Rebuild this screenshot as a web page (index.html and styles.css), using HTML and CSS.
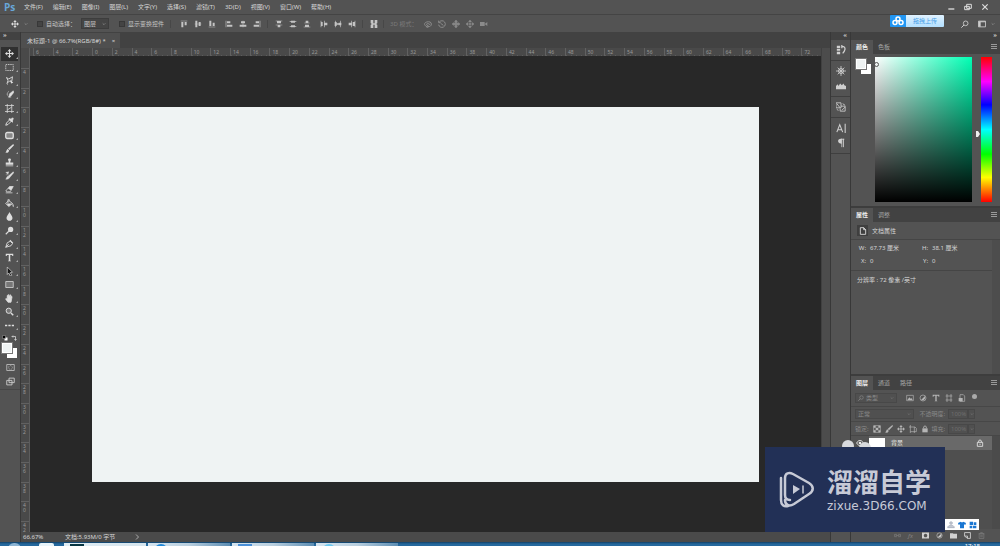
FILE: index.html
```html
<!DOCTYPE html>
<html lang="zh-CN">
<head>
<meta charset="utf-8">
<title>未标题-1</title>
<link rel="stylesheet" href="styles.css">
</head>
<body>
<svg class="defs" aria-hidden="true">
  <symbol id="move" viewBox="0 0 12 12"><path d="M6 2v8M2 6h8" stroke="currentColor" stroke-width="1.400"/><path d="M6 0 8.500 3h-5zM6 12 3.500 9h5zM0 6l3-2.500v5zM12 6 9 8.500v-5z" fill="currentColor"/></symbol>
  <symbol id="chev" viewBox="0 0 12 12"><path d="m2 4 4 4 4-4" fill="none" stroke="currentColor" stroke-width="2"/></symbol>
  <symbol id="al-top" viewBox="0 0 12 12"><path d="M1 1h10v1H1zM2 3h3v8H2zM7 3h3v5H7z" fill="currentColor"/></symbol>
  <symbol id="al-mid" viewBox="0 0 12 12"><path d="M1 5.500h10v1H1zM2 1h3v10H2zM7 3h3v6H7z" fill="currentColor"/></symbol>
  <symbol id="al-bot" viewBox="0 0 12 12"><path d="M1 10h10v1H1zM2 1h3v8H2zM7 4h3v5H7z" fill="currentColor"/></symbol>
  <symbol id="al-left" viewBox="0 0 12 12"><path d="M1 1h1v10H1zM3 2h5v3H3zM3 7h8v3H3z" fill="currentColor"/></symbol>
  <symbol id="al-cen" viewBox="0 0 12 12"><path d="M5.500 1h1v10h-1zM3 2h6v3H3zM1 7h10v3H1z" fill="currentColor"/></symbol>
  <symbol id="al-right" viewBox="0 0 12 12"><path d="M10 1h1v10h-1zM4 2h5v3H4zM1 7h8v3H1z" fill="currentColor"/></symbol>
  <symbol id="di-top" viewBox="0 0 12 12"><path d="M1 1h10v1H1zM3 2h6v3H3zM1 7h10v1H1zM4 8h4v3H4z" fill="currentColor"/></symbol>
  <symbol id="di-mid" viewBox="0 0 12 12"><path d="M1 2h10v1H1zM3 1h6v3H3zM1 9h10v1H1zM3 8h6v3H3z" fill="currentColor"/></symbol>
  <symbol id="di-bot" viewBox="0 0 12 12"><path d="M4 1h4v3H4zM2 4h8v1H2zM3 7h6v3H3zM1 10h10v1H1z" fill="currentColor"/></symbol>
  <symbol id="di-left" viewBox="0 0 12 12"><path d="M1 1h1v10H1zM2 3h2v6H2zM6 1h1v10H6zM7 4h4v4H7z" fill="currentColor"/></symbol>
  <symbol id="di-cen" viewBox="0 0 12 12"><path d="M2 1h1v10H2zM1 3h3v6H1zM9 1h1v10H9zM7 4h4v4H7zM4 5h3v2H4z" fill="currentColor"/></symbol>
  <symbol id="di-right" viewBox="0 0 12 12"><path d="M5 1h1v10H5zM1 4h4v4H1zM10 1h1v10h-1zM7 3h3v6H7z" fill="currentColor"/></symbol>
  <symbol id="auto" viewBox="0 0 12 12"><path d="M1 0h4v5H1zM7 0h4v5H7zM1 7h4v5H1zM7 7h4v5H7zM2 5h8v2H2z" fill="currentColor"/></symbol>
  <symbol id="orbit" viewBox="0 0 12 12"><path d="M3 9C0 8 0 4 4 3s7 0 7 3-2 4-5 4M3 7c2-2 4-2 6 0M6 8v3l-3-1z" fill="none" stroke="currentColor" stroke-width="1.500"/></symbol>
  <symbol id="roll" viewBox="0 0 12 12"><path d="M2 3a5 5 0 1 1-1 4M1 1v3h3M4 5l4 3" fill="none" stroke="currentColor" stroke-width="1.500"/></symbol>
  <symbol id="pan" viewBox="0 0 12 12"><path d="m6 0 2 3H7v2h2V4l3 2-3 2V7H7v2h1l-2 3-2-3h1V7H3v1L0 6l3-2v1h2V3H4z" fill="currentColor" stroke="currentColor"/></symbol>
  <symbol id="slide" viewBox="0 0 12 12"><path d="m6 0 2 3H4zm0 12L4 9h4zM0 6l3-2v4zm12 0L9 8V4z" fill="currentColor" stroke="currentColor"/><circle cx="6" cy="6" r="1.500" fill="currentColor"/></symbol>
  <symbol id="cam" viewBox="0 0 12 12"><path d="M0 3h7v6H0zM7 6l4-3v6z" fill="currentColor"/></symbol>
  <symbol id="search" viewBox="0 0 12 12"><circle cx="7" cy="5" r="3.500" fill="none" stroke="currentColor" stroke-width="1.300"/><path d="m4.500 7.500-4 4" stroke="currentColor" stroke-width="1.500"/></symbol>
  <symbol id="space" viewBox="0 0 12 12"><path d="M.7 1.700h10.600v8.600H.7z" fill="none" stroke="currentColor" stroke-width="1.300"/><path d="M1 2h3v8H1zM1 2h10v1.500H1z" fill="currentColor"/></symbol>
  <symbol id="marquee" viewBox="0 0 12 12"><path d="M1 2h10v8H1z" fill="none" stroke="currentColor" stroke-dasharray="2 1"/></symbol>
  <symbol id="lasso" viewBox="0 0 12 12"><path d="m2 2 3 2 5-3-1 6H6L3 9l1-3zM3 9c-1 1 0 2 1 2" fill="none" stroke="currentColor" stroke-width="1.200"/><path d="m7 5 4 4-3 1z" fill="currentColor"/></symbol>
  <symbol id="quick" viewBox="0 0 12 12"><path d="M5 2a4 4 0 1 0 4 7" fill="none" stroke="currentColor" stroke-dasharray="2 1"/><path d="m11 1 1 2-4 5-3 2 1-5z" fill="currentColor" stroke="currentColor" stroke-width=".6"/></symbol>
  <symbol id="crop" viewBox="0 0 12 12"><path d="M3 0v12M9 0v12M0 2h12M0 10h12M3 8l6-4" fill="none" stroke="currentColor"/></symbol>
  <symbol id="dropper" viewBox="0 0 12 12"><path d="m1 11 1-3 5-5 2 2-5 5z" fill="none" stroke="currentColor" stroke-width="1.300"/><path d="M6 2 8 3l2-2 1 1-1 3v2L5 3z" fill="currentColor" stroke="currentColor"/></symbol>
  <symbol id="patch" viewBox="0 0 12 12"><rect x="1" y="2" width="10" height="8" rx="2" fill="#888" stroke="currentColor" stroke-width="1.800"/></symbol>
  <symbol id="brush" viewBox="0 0 12 12"><path d="m11 0 1 1.500L6 8 4 6zM3.500 6.500l2 2C5 12 2 12 0 11c2 0 2-4 3.500-4.500" fill="currentColor"/></symbol>
  <symbol id="stamp" viewBox="0 0 12 12"><path d="M4 2c0-2 4-2 4 0L7 5v1h4v3H1V6h4V5zM1 10h10v1H1z" fill="currentColor"/></symbol>
  <symbol id="history" viewBox="0 0 12 12"><path d="m11 1 1 1-6 7-2-2zM3.500 7 6 9c-1 2-3 2-5 2 1-1 1-3 2.500-4M1 2l4-1-1 3zM1 5h4" fill="currentColor" stroke="currentColor" stroke-width=".5"/></symbol>
  <symbol id="eraser" viewBox="0 0 12 12"><path d="m1 8 5-6h5L7 9H3z" fill="none" stroke="currentColor"/><path d="m4 5 2-3h5L8 7zM1 10h9v1H1z" fill="currentColor"/></symbol>
  <symbol id="bucket" viewBox="0 0 12 12"><path d="m1 6 4-4 5 4-5 4zM4 5V1c0-1 2-1 2 1" fill="none" stroke="currentColor" stroke-width="1.200"/><path d="M2 6h7l-4 4zM10 6c2 1 2 4 1 5-1-1-1-3-1-5" fill="currentColor"/></symbol>
  <symbol id="drop" viewBox="0 0 12 12"><path d="M6 0c1 3 4 5 4 8 0 5-8 5-8 0 0-3 3-5 4-8" fill="currentColor"/></symbol>
  <symbol id="dodge" viewBox="0 0 12 12"><circle cx="7.500" cy="4.500" r="3.500" fill="currentColor"/><path d="m5 7-4 4" stroke="currentColor" stroke-width="1.500"/></symbol>
  <symbol id="pen" viewBox="0 0 12 12"><path d="m1 11 2-6 4-2 3 3-2 3zM1 11l4-4" fill="none" stroke="currentColor" stroke-width="1.200"/><path d="m7 1 4 4-1 1-4-4z" fill="currentColor"/></symbol>
  <symbol id="type" viewBox="0 0 12 12"><path d="M1 1h10v3h-1L9 2.500H7V10l1 .5v.5H4v-.5l1-.5V2.500H3L2 4H1z" fill="currentColor"/></symbol>
  <symbol id="arrow" viewBox="0 0 12 12"><path d="m3 0 7 7-3 .5L9 11l-2 1-2-4-2 2z" fill="#161616" stroke="currentColor" stroke-width=".9"/></symbol>
  <symbol id="rect" viewBox="0 0 12 12"><path d="M1 2h10v8H1z" fill="#777" stroke="currentColor"/></symbol>
  <symbol id="hand" viewBox="0 0 12 12"><path d="M4 11 1 7c0-2 1-1 2 0V2c1-1 1 0 1.500 3V1c1-1 1 0 1.500 3l1-3c1 0 1 1 .5 4l1-2c1 0 1 1 .5 3L8 11z" fill="currentColor" stroke="currentColor"/></symbol>
  <symbol id="zoom" viewBox="0 0 12 12"><circle cx="5" cy="5" r="3.500" fill="#777" stroke="currentColor" stroke-width="1.300"/><path d="m8 8 3 3" stroke="currentColor" stroke-width="2"/></symbol>
  <symbol id="dots" viewBox="0 0 12 12"><path d="M0 5h3v2H0zM4.500 5h3v2h-3zM9 5h3v2H9z" fill="currentColor"/></symbol>
  <symbol id="mask" viewBox="0 0 12 12"><path d="M1 2h10v8H1z" fill="none" stroke="currentColor"/><circle cx="6" cy="6" r="2.500" fill="none" stroke="currentColor" stroke-dasharray="1 1"/></symbol>
  <symbol id="screen" viewBox="0 0 12 12"><path d="M4 1.500h7v6H4zM1 4.500h7v6H1z" fill="#535353" stroke="currentColor" stroke-width="1.200"/></symbol>
  <symbol id="hist" viewBox="0 0 12 12"><path d="M1 1h4v2.500H1zM1 4.500h4V7H1zM1 8h4v3H1z" fill="currentColor"/><path d="M7 2h2c3 1 2 5-1 8M7 0v4" fill="none" stroke="currentColor" stroke-width="1.500"/></symbol>
  <symbol id="wheel" viewBox="0 0 12 12"><path d="M6 0v12M0 6h12M2 2l8 8M10 2l-8 8" stroke="currentColor"/><circle cx="6" cy="6" r="3" fill="none" stroke="currentColor"/></symbol>
  <symbol id="levels" viewBox="0 0 12 12"><path d="M0 10V6l2-2 1 2 2-3 2 2 2-2 1 2 2 1v4z" fill="currentColor"/></symbol>
  <symbol id="clone" viewBox="0 0 12 12"><path d="M0 1h6v6H0zM6 5h5v6H5V8M1 2l4 5M7 10l4-4M8 2l3 2M1 9l2 1" fill="none" stroke="currentColor"/></symbol>
  <symbol id="char" viewBox="0 0 12 12"><path d="m1 11 3.500-9L8 11M2.500 8h4M11 1v11" fill="none" stroke="currentColor" stroke-width="1.300"/></symbol>
  <symbol id="para" viewBox="0 0 12 12"><path d="M9 1v10M7 1v10M10 1.500H6" fill="none" stroke="currentColor"/><path d="M7 1C1 0 1 7 7 7z" fill="currentColor"/></symbol>
  <symbol id="menu" viewBox="0 0 12 12"><path d="M0 1h12M0 5h12M0 9h12" stroke="currentColor" stroke-width="2"/></symbol>
  <symbol id="page" viewBox="0 0 12 12"><path d="M2 1h5l3 3v7H2zM7 1v3h3" fill="none" stroke="currentColor" stroke-width="1.200"/></symbol>
  <symbol id="image" viewBox="0 0 12 12"><path d="M1 2h10v8H1z" fill="none" stroke="currentColor"/><path d="m2 9 3-4 2 2 1-1 2 3z" fill="currentColor"/></symbol>
  <symbol id="half" viewBox="0 0 12 12"><circle cx="6" cy="6" r="4.500" fill="none" stroke="currentColor"/><path d="M9 3a4.500 4.500 0 0 1-6 6z" fill="currentColor"/></symbol>
  <symbol id="frame" viewBox="0 0 12 12"><path d="M3 0v12M9 0v12M1 3h10M1 9h10" fill="none" stroke="currentColor"/></symbol>
  <symbol id="smart" viewBox="0 0 12 12"><path d="M3 1h5l2 2v8H3z" fill="none" stroke="currentColor"/><path d="M1 6h6v5H1z" fill="currentColor"/></symbol>
  <symbol id="checker" viewBox="0 0 12 12"><path d="M1 1h10v10H1z" fill="none" stroke="currentColor"/><path d="M1 1h3v3H1zM8 1h3v3H8zM4 4h4v4H4zM1 8h3v3H1zM8 8h3v3H8z" fill="currentColor"/></symbol>
  <symbol id="board" viewBox="0 0 12 12"><path d="M2 0v12M0 3h9l2 2v5M2 10h9M8 3v9" fill="none" stroke="currentColor"/></symbol>
  <symbol id="lock" viewBox="0 0 12 12"><path d="M4 5V3c0-2 4-2 4 0v2" fill="none" stroke="currentColor" stroke-width="1.300"/><path d="M2 5h8v6H2z" fill="currentColor"/></symbol>
  <symbol id="lock-o" viewBox="0 0 12 12"><path d="M4 5V3c0-2 4-2 4 0v2M2 5h8v6H2zM6 7v2" fill="none" stroke="currentColor" stroke-width="1.200"/></symbol>
  <symbol id="eye" viewBox="0 0 12 12"><path d="M1 6c2-5 8-5 10 0-2 5-8 5-10 0" fill="none" stroke="currentColor" stroke-width="1.300"/><circle cx="6" cy="6" r="2" fill="currentColor"/></symbol>
  <symbol id="link" viewBox="0 0 12 12"><path d="M5 4H1v4h4M7 4h4v4H7M3 6h6" fill="none" stroke="currentColor"/></symbol>
  <symbol id="addmask" viewBox="0 0 12 12"><path d="M0 1h12v10H0zm6 2a3 3 0 1 0 .1 0" fill="currentColor" fill-rule="evenodd"/></symbol>
  <symbol id="folder" viewBox="0 0 12 12"><path d="M0 2h5l1 1h6v8H0z" fill="currentColor"/></symbol>
  <symbol id="new" viewBox="0 0 12 12"><path d="M1 1h10v10H6L1 7zM1 7h5v4" fill="none" stroke="currentColor" stroke-width="1.500"/></symbol>
  <symbol id="trash" viewBox="0 0 12 12"><path d="M2 3h8v8H2zM1 3h10M4 1h4M5 5v4M7 5v4" fill="none" stroke="currentColor"/></symbol>
</svg>

<header class="menubar">
  <span class="logo">Ps</span>
  <nav class="menus">
    <button>文件(F)</button><button>编辑(E)</button><button>图像(I)</button><button>图层(L)</button><button>文字(Y)</button><button>选择(S)</button><button>滤镜(T)</button><button>3D(D)</button><button>视图(V)</button><button>窗口(W)</button><button>帮助(H)</button>
  </nav>
  <div class="winbtns">
    <button aria-label="最小化"><svg viewBox="0 0 12 12"><path d="M2 9h9" stroke="currentColor" stroke-width="2"/></svg></button>
    <button aria-label="还原"><svg viewBox="0 0 12 12"><path d="M4 2h7v6H4zM1 5h7v5H1z" fill="none" stroke="currentColor" stroke-width="1.500"/></svg></button>
    <button aria-label="关闭"><svg viewBox="0 0 12 12"><path d="m2 2 8 8M10 2l-8 8" stroke="currentColor" stroke-width="1.800"/></svg></button>
  </div>
</header>

<div class="options">
  <div class="current"><svg class="big"><use href="#move"/></svg><svg class="tiny"><use href="#chev"/></svg></div>
  <label class="check"><input type="checkbox">自动选择：</label>
  <span class="select"><select aria-label="自动选择目标"><option>图层</option></select><svg class="tiny"><use href="#chev"/></svg></span>
  <label class="check second"><input type="checkbox">显示变换控件</label>
  <div class="group first">
    <button aria-label="顶对齐"><svg><use href="#al-top"/></svg></button><button aria-label="垂直居中"><svg><use href="#al-mid"/></svg></button><button aria-label="底对齐"><svg><use href="#al-bot"/></svg></button>
  </div>
  <div class="group">
    <button aria-label="左对齐"><svg><use href="#al-left"/></svg></button><button aria-label="水平居中"><svg><use href="#al-cen"/></svg></button><button aria-label="右对齐"><svg><use href="#al-right"/></svg></button>
  </div>
  <div class="group ruled">
    <button aria-label="按顶分布"><svg><use href="#di-top"/></svg></button><button aria-label="垂直分布"><svg><use href="#di-mid"/></svg></button><button aria-label="按底分布"><svg><use href="#di-bot"/></svg></button>
  </div>
  <div class="group">
    <button aria-label="按左分布"><svg><use href="#di-left"/></svg></button><button aria-label="水平分布"><svg><use href="#di-cen"/></svg></button><button aria-label="按右分布"><svg><use href="#di-right"/></svg></button>
  </div>
  <div class="group ruled"><button aria-label="自动对齐"><svg><use href="#auto"/></svg></button></div>
  <div class="mode">3D 模式：</div>
  <div class="group dim">
    <button disabled aria-label="旋转"><svg><use href="#orbit"/></svg></button><button disabled aria-label="滚动"><svg><use href="#roll"/></svg></button><button disabled aria-label="拖动"><svg><use href="#pan"/></svg></button><button disabled aria-label="滑动"><svg><use href="#slide"/></svg></button><button disabled aria-label="缩放"><svg><use href="#cam"/></svg></button>
  </div>
  <button class="upload"><span class="cloud"><svg viewBox="0 0 16 12"><g fill="none" stroke="#fff" stroke-width="1.500"><circle cx="8" cy="4" r="2"/><circle cx="5" cy="7.500" r="2"/><circle cx="11" cy="7.500" r="2"/></g></svg></span><span class="uptext">拖拽上传</span></button>
  <div class="right">
    <button aria-label="搜索"><svg><use href="#search"/></svg></button>
    <button aria-label="工作区"><svg><use href="#space"/></svg></button>
    <svg class="tiny"><use href="#chev"/></svg>
  </div>
</div>

<main class="work">
  <aside class="tools">
    <div class="strip left">»</div>
    <div class="toolbox">
      <div class="toollist">
        <button class="on" aria-label="移动"><svg><use href="#move"/></svg></button>
        <button aria-label="选框"><svg><use href="#marquee"/></svg></button>
        <button aria-label="套索"><svg><use href="#lasso"/></svg></button>
        <button aria-label="快速选择"><svg><use href="#quick"/></svg></button>
        <button aria-label="裁剪"><svg><use href="#crop"/></svg></button>
        <button aria-label="吸管"><svg><use href="#dropper"/></svg></button>
        <button aria-label="修补"><svg><use href="#patch"/></svg></button>
        <button aria-label="画笔"><svg><use href="#brush"/></svg></button>
        <button aria-label="图章"><svg><use href="#stamp"/></svg></button>
        <button aria-label="历史画笔"><svg><use href="#history"/></svg></button>
        <button aria-label="橡皮擦"><svg><use href="#eraser"/></svg></button>
        <button aria-label="油漆桶"><svg><use href="#bucket"/></svg></button>
        <button aria-label="模糊"><svg><use href="#drop"/></svg></button>
        <button aria-label="减淡"><svg><use href="#dodge"/></svg></button>
        <button aria-label="钢笔"><svg><use href="#pen"/></svg></button>
        <button aria-label="文字"><svg><use href="#type"/></svg></button>
        <button aria-label="路径选择"><svg><use href="#arrow"/></svg></button>
        <button aria-label="矩形"><svg><use href="#rect"/></svg></button>
        <button aria-label="抓手"><svg><use href="#hand"/></svg></button>
        <button aria-label="放大镜"><svg><use href="#zoom"/></svg></button>
        <button aria-label="更多"><svg><use href="#dots"/></svg></button>
      </div>
      <div class="swap">
        <svg viewBox="0 0 12 12"><path d="M5 5h6v6H5z" fill="#fff"/><path d="M1 1h6v6H1z" fill="#000" stroke="#aaa"/></svg>
        <svg viewBox="0 0 12 12"><path d="M2 3h7v7M4 1 2 3l2 2M7 8l2 3 2-3" fill="none" stroke="#ddd" stroke-width="1.500"/></svg>
      </div>
      <div class="swatches"><i class="fg"></i><i class="bg"></i></div>
      <div class="modes">
        <button aria-label="快速蒙版"><svg><use href="#mask"/></svg></button>
        <button aria-label="屏幕模式"><svg><use href="#screen"/></svg></button>
      </div>
    </div>
  </aside>

  <section class="doc">
    <div class="doctabs"><div class="doctab"><span>未标题-1 @ 66.7%(RGB/8#) *</span><button aria-label="关闭文档">×</button></div></div>
    <div class="view">
      <div class="corner"></div>
      <div class="hruler"><span>6</span><span>4</span><span>2</span><span>0</span><span>2</span><span>4</span><span>6</span><span>8</span><span>10</span><span>12</span><span>14</span><span>16</span><span>18</span><span>20</span><span>22</span><span>24</span><span>26</span><span>28</span><span>30</span><span>32</span><span>34</span><span>36</span><span>38</span><span>40</span><span>42</span><span>44</span><span>46</span><span>48</span><span>50</span><span>52</span><span>54</span><span>56</span><span>58</span><span>60</span><span>62</span><span>64</span><span>66</span><span>68</span><span>70</span><span>72</span></div>
      <div class="scroll"></div>
      <div class="vruler"><span>4</span><span>2</span><span>0</span><span>2</span><span>4</span><span>6</span><span>8</span><span>10</span><span>12</span><span>14</span><span>16</span><span>18</span><span>20</span><span>22</span><span>24</span><span>26</span><span>28</span><span>30</span><span>32</span><span>34</span><span>36</span><span>38</span><span>40</span><span class="last">42</span></div>
      <div class="canvas"><div class="artboard"></div></div>
    </div>
    <footer class="status"><span class="pct">66.67%</span><span class="info">文档:5.93M/0 字节</span><svg viewBox="0 0 12 12"><path d="m4 1 5 5-5 5" fill="none" stroke="currentColor" stroke-width="2"/></svg></footer>
  </section>

  <aside class="dock">
    <div class="strip">«</div>
    <div class="dockgroup"><button aria-label="历史记录"><svg><use href="#hist"/></svg></button></div>
    <div class="dockgroup"><button aria-label="色轮"><svg><use href="#wheel"/></svg></button><button aria-label="直方图"><svg><use href="#levels"/></svg></button></div>
    <div class="dockgroup"><button aria-label="仿制源"><svg><use href="#clone"/></svg></button></div>
    <div class="dockgroup"><button aria-label="字符"><svg><use href="#char"/></svg></button><button aria-label="段落"><svg><use href="#para"/></svg></button></div>
  </aside>

  <aside class="panels">
    <div class="strip">»</div>
    <section class="panel">
      <div class="tabs"><button class="on">颜色</button><button>色板</button><svg><use href="#menu"/></svg></div>
      <div class="color">
        <div class="swatches"><i class="fg"></i><i class="bg"></i></div>
        <div class="field"><i class="ring"></i></div>
        <svg class="ptr" viewBox="0 0 4 6"><path d="M0 0h2l2 3-2 3H0z" fill="#eee"/></svg>
        <div class="hue"></div>
      </div>
    </section>
    <section class="panel grow">
      <div class="tabs"><button class="on">属性</button><button>调整</button><svg><use href="#menu"/></svg></div>
      <div class="prophead"><span class="pageicon"><svg><use href="#page"/></svg></span>文档属性</div>
      <div class="props">
        <dl>
          <div><dt>W:</dt><dd>67.73 厘米</dd></div><div><dt>H:</dt><dd>38.1 厘米</dd></div>
          <div><dt>X:</dt><dd>0</dd></div><div><dt>Y:</dt><dd>0</dd></div>
        </dl>
        <p>分辨率 : 72 像素 /英寸</p>
      </div>
    </section>
    <section class="panel grow">
      <div class="tabs"><button class="on">图层</button><button>通道</button><button>路径</button><svg><use href="#menu"/></svg></div>
      <div class="row filter">
        <span class="box kind"><svg><use href="#search"/></svg>类型<svg class="tiny"><use href="#chev"/></svg></span>
        <span class="kinds"><svg><use href="#image"/></svg><svg><use href="#half"/></svg><svg><use href="#type"/></svg><svg><use href="#frame"/></svg><svg><use href="#smart"/></svg></span><i class="dot"></i>
      </div>
      <div class="row"><span class="box blend">正常<svg class="tiny"><use href="#chev"/></svg></span><span class="lab">不透明度:</span><span class="box num">100%</span><span class="box drop"><svg class="tiny"><use href="#chev"/></svg></span></div>
      <div class="row lockrow"><span>锁定:</span><span class="locks"><svg><use href="#checker"/></svg><svg><use href="#brush"/></svg><svg><use href="#move"/></svg><svg><use href="#board"/></svg><svg><use href="#lock"/></svg></span><span class="lab">填充:</span><span class="box num">100%</span><span class="box drop"><svg class="tiny"><use href="#chev"/></svg></span></div>
      <div class="layers">
        <div class="layer"><span class="vis"><svg><use href="#eye"/></svg></span><i class="thumb"></i><span>背景</span><svg class="lk"><use href="#lock-o"/></svg></div>
      </div>
      <div class="actions">
        <svg class="off"><use href="#link"/></svg><span class="fx">fx</span><svg><use href="#addmask"/></svg><svg><use href="#half"/></svg><svg><use href="#folder"/></svg><svg><use href="#new"/></svg><svg class="off"><use href="#trash"/></svg>
      </div>
    </section>
  </aside>
</main>

<footer class="taskbar">
  <i class="start"></i><i class="pin"></i>
  <div class="tasks"><i class="task ps"></i><i class="task"></i><i class="task wide"></i><i class="task sky"></i></div>
  <time>17:18</time>
</footer>

<div class="brand">
  <i class="ear one"></i><i class="ear two"></i>
  <div class="card">
    <svg viewBox="0 0 36 38" fill="none" stroke="#c7cad6" stroke-width="2.500" stroke-linecap="round"><path d="M2 7v22c0 5 3 7 7 6M11 29c-4 0-5-2-5-5V7c0-5 4-6 8-4l16 9c5 3 5 8 0 11L15 33c-5 3-9 1-9-4"/><path d="m14 14 7 4-7 5z" fill="#c7cad6" stroke="none"/><path d="M24 15v7" stroke-width="1.500"/></svg>
    <div class="words"><strong>溜溜自学</strong><span>zixue.3D66.COM</span></div>
  </div>
  <div class="tray">
    <svg viewBox="0 0 12 12"><path d="M6 1a2 2 0 1 0 .1 0M1 10c0-5 10-5 10 0z" fill="#c3c8d2" stroke="#9ba3b3"/></svg>
    <svg viewBox="0 0 12 12"><path d="m0 3 4-2c1 1 3 1 4 0l4 2-1 3-2-1v6H3V5L1 6z" fill="#1976d2"/></svg>
    <svg viewBox="0 0 12 12"><path d="M1 1h5v5H1zM7 2h4v4H7zM1 7h4v4H1zM6 7h5v4H6z" fill="#1976d2"/></svg>
  </div>
</div>
</body>
</html>
```
FILE: styles.css
```css
* { box-sizing: border-box; }
html, body { height: 100%; }
body {
  margin: 0;
  display: flex;
  flex-direction: column;
  overflow: hidden;
  position: relative;
  background: #535353;
  color: #d6d6d6;
  font: 6px/8px "Noto Sans", "Noto Sans CJK SC", sans-serif;
}
.defs { display: none; }
svg { width: 8px; height: 8px; flex: none; display: block; }
svg.tiny { width: 4px; height: 4px; color: #999; }
button, select {
  font: inherit;
  color: inherit;
  background: none;
  border: 0;
  padding: 0;
  margin: 0;
  white-space: nowrap;
}
i { display: block; flex: none; }

/* Menu bar */
.menubar { display: flex; align-items: center; height: 14px; padding: 0 11px 0 4px; flex: none; }
.logo { width: 20px; color: #68a6d8; font: bold 10px/12px "Open Sans", sans-serif; }
.menus { display: flex; gap: 10px; }
.winbtns { display: flex; gap: 9px; margin-left: auto; color: #ddd; }

/* Options bar */
.options {
  display: flex;
  align-items: center;
  height: 18px;
  flex: none;
  padding: 0 5px 0 11px;
  border-top: 1px solid #444;
  color: #c4c4c4;
}
.current { display: flex; align-items: center; gap: 5px; width: 26px; color: #ddd; }
.check { display: flex; align-items: center; gap: 3px; white-space: nowrap; }
.check input { appearance: none; width: 6px; height: 6px; margin: 0; background: #444; border: 1px solid #383838; }
.check.second { margin-left: 10px; }
.select { display: flex; align-items: center; width: 28px; height: 11px; padding: 0 2px; margin-left: 5px; background: #454545; border: 1px solid #3d3d3d; }
.select select { appearance: none; flex: 1; min-width: 0; }
.group { display: flex; gap: 6px; padding-left: 9px; }
.group.first { margin-left: 6px; border-left: 1px solid #474747; }
.group.ruled { margin-left: 6px; padding-left: 7px; border-left: 1px solid #474747; }
.mode { margin-left: 5px; padding-left: 6px; border-left: 1px solid #474747; color: #7c7c7c; white-space: nowrap; }
.dim { padding-left: 7px; color: #8b8b8b; }
.upload { display: flex; align-items: center; width: 54px; height: 12px; margin-left: auto; margin-bottom: 5px; border-radius: 1px; overflow: hidden; }
.cloud { width: 16px; height: 12px; background: #2196f3; }
.cloud svg { width: 16px; height: 12px; }
.uptext { flex: 1; height: 12px; line-height: 12px; background: linear-gradient(#e0f2ff, #b3e0ff); color: #4a9fe8; }
.right { display: flex; align-items: center; gap: 9px; margin-left: 17px; color: #ccc; }
.right .tiny { margin-left: -4px; }

/* Workspace */
.work {
  flex: 1;
  min-height: 0;
  display: grid;
  grid-template-columns: 20px minmax(0, 1fr) 19px 149px;
  column-gap: 1px;
  background: #383838;
}
.tools, .doc, .dock, .panels { display: flex; flex-direction: column; min-height: 0; background: #535353; }
.strip { height: 8px; flex: none; padding-right: 3px; background: #424242; color: #ccc; font-weight: bold; line-height: 6px; text-align: right; }
.strip.left { padding-left: 3px; text-align: left; }

.toolbox { display: flex; flex-direction: column; height: 350px; padding-top: 7px; border-bottom: 1px solid #474747; }
.toollist { display: flex; flex-direction: column; height: 285px; flex: none; }
.toollist button { position: relative; flex: 1; display: flex; align-items: center; justify-content: center; margin: 0 2px 0 1px; color: #dedede; }
.toollist button svg { width: 9px; height: 9px; }
.toollist button::after { content: ""; position: absolute; right: 0; bottom: 2px; border-left: 2px solid transparent; border-bottom: 2px solid #aaa; }
.toollist .on { background: #303030; }
.swap { display: flex; justify-content: space-between; padding: 3px 3px 0 2px; }
.swap svg { width: 6px; height: 6px; }
.swatches { display: grid; grid-template-columns: repeat(3, 5px); grid-template-rows: repeat(3, 5px); flex: none; }
.swatches .fg { grid-area: 1 / 1 / 3 / 3; z-index: 1; background: #eff3f3; border: 1px solid #fff; outline: 1px solid #777; outline-offset: 0; }
.swatches .bg { grid-area: 2 / 2 / 4 / 4; background: #fff; }
.tools .swatches { margin: 2px 0 0 2px; }
.modes { display: flex; flex-direction: column; align-items: center; gap: 5px; padding-top: 5px; color: #ccc; }
.modes svg { width: 9px; height: 9px; }

/* Document window */
.doctabs { display: flex; height: 16px; flex: none; padding-top: 1px; background: #424242; }
.doctab { display: flex; align-items: center; gap: 6px; padding: 0 5px 0 6px; background: #4f4f4f; white-space: nowrap; }
.view { flex: 1; min-height: 0; display: grid; grid-template: 8px minmax(0, 1fr) / 9px minmax(0, 1fr) 9px; background: #494949; }
.corner { border-right: 1px solid #5c5c5c; }
.hruler, .vruler { color: #999; font-size: 5px; line-height: 5px; }
.hruler { display: flex; padding-left: 3px; }
.hruler span { flex: 1; min-width: 0; padding: 2px 0 0 2px; border-left: 1px solid #616161; background: repeating-linear-gradient(90deg, #5c5c5c 0 1px, transparent 1px 5px) bottom / 100% 1px no-repeat; }
.scroll { grid-area: 1 / 3 / 3 / 4; background: #4c4c4c; border-left: 1px solid #404040; }
.vruler { display: flex; flex-direction: column; padding-top: 12px; overflow: hidden; border-right: 1px solid #5c5c5c; }
.vruler span { flex: 1; min-height: 0; width: 8px; padding: 1px 3px 0 2px; border-top: 1px solid #616161; word-break: break-all; }
.vruler .last { flex: 0 0 11px; }
.canvas { display: flex; align-items: center; justify-content: center; min-height: 0; padding-top: 1px; background: #282828; }
.artboard { width: 84.300%; aspect-ratio: 16 / 9; background: #eff3f3; }
.status { display: flex; align-items: center; height: 10px; flex: none; padding-left: 2px; background: #4a4a4a; white-space: nowrap; }
.pct { width: 42px; }
.status svg { width: 6px; height: 6px; margin-left: 19px; color: #aaa; }

/* Icon dock */
.dockgroup { display: flex; flex-direction: column; align-items: center; gap: 5px; padding: 5px 0; border-bottom: 1px solid #3f3f3f; color: #d0d0d0; }
.dockgroup svg { width: 10px; height: 10px; }

/* Panels */
.panel { display: flex; flex-direction: column; flex: none; border-bottom: 2px solid #3d3d3d; }
.panel.grow { flex: 1; min-height: 0; }
.panel:last-child { border-bottom: 0; }
.tabs { display: flex; align-items: center; height: 14px; flex: none; background: #424242; color: #a5a5a5; }
.tabs button { width: 22px; height: 14px; }
.tabs .on { background: #535353; color: #eee; font-weight: bold; }
.tabs svg { width: 6px; height: 6px; margin: 0 3px 0 auto; color: #999; }
.color { display: flex; align-items: stretch; height: 152px; padding: 3px 8px 4px 5px; }
.color .swatches { width: 19px; padding-top: 2px; }
.field { flex: 1; background: linear-gradient(transparent, #000), linear-gradient(90deg, #fff, #00ffb4); overflow: hidden; }
.ring { width: 5px; height: 5px; margin: 5px 0 0 -1px; border: 1px solid #555; border-radius: 50%; }
.ptr { width: 4px; height: 6px; margin: 74px 1px 0 4px; }
.hue { width: 11px; background: linear-gradient(#f00, #f0f 17%, #00f 33%, #0ff 50%, #0f0 67%, #ff0 83%, #f00); }

.prophead { display: flex; align-items: center; gap: 4px; height: 18px; flex: none; padding-left: 6px; border-bottom: 1px solid #454545; }
.pageicon { display: grid; place-items: center; width: 11px; height: 11px; background: #3f3f3f; color: #eee; }
.props { flex: 1; border-right: 8px solid #4d4d4d; }
dl { display: grid; grid-template-columns: 62px 1fr; grid-auto-rows: 8px; row-gap: 5px; margin: 0; height: 31px; padding: 4px 0 0 7px; border-bottom: 1px solid #454545; white-space: nowrap; }
dl div { display: flex; }
dt { width: 8px; margin-right: 4px; text-align: right; }
dd { margin: 0; }
.props p { margin: 5px 6px; }

.row { display: flex; align-items: center; height: 15px; flex: none; padding: 0 4px; border-bottom: 1px solid #474747; color: #898989; white-space: nowrap; }
.box { display: flex; align-items: center; height: 10px; border: 1px solid #484848; background: #505050; padding: 0 2px; }
.box .tiny { margin-left: auto; color: #777; }
.filter { height: 17px; }
.kind { width: 42px; gap: 2px; }
.kind svg:first-child { width: 6px; height: 6px; }
.kinds { display: flex; gap: 5px; margin-left: 9px; color: #b5b5b5; }
.dot { width: 5px; height: 5px; margin: 0 0 4px 6px; border-radius: 50%; background: #aaa; }
.blend { width: 59px; }
.lab { width: 27px; margin-left: auto; text-align: right; }
.num { width: 20px; margin-left: 3px; color: #6f6f6f; }
.drop { width: 7px; margin-right: 21px; padding: 0 1px; }
.lockrow { height: 14px; }
.locks { display: flex; gap: 4px; margin-left: 4px; color: #b5b5b5; }
.locks svg { width: 8px; height: 8px; }
.lockrow .lab { width: 18px; }
.layers { flex: 1; background: #4f4f4f; border-right: 8px solid #4b4b4b; }
.layer { display: flex; align-items: center; height: 14px; background: #696969; color: #eee; }
.vis { display: flex; align-items: center; width: 18px; height: 14px; padding-left: 5px; background: #535353; }
.thumb { width: 16px; height: 10px; margin-right: 6px; background: #fff; }
.lk { margin: 0 8px 0 auto; }
.actions { display: flex; align-items: center; justify-content: flex-end; gap: 7px; height: 13px; flex: none; padding: 0 15px 0 0; color: #d0d0d0; }
.actions svg { width: 7px; height: 7px; }
.actions .off, .fx { color: #858585; }
.fx { width: 7px; font-style: italic; }

/* Taskbar */
.taskbar { display: flex; height: 4px; flex: none; padding-right: 20px; background: linear-gradient(#123f66, #25689d 2px); overflow: hidden; }
.start { width: 13px; height: 12px; margin: 1px 0 0 8px; border-radius: 6px; background: #8cb4d3; }
.pin { width: 15px; height: 6px; margin: 1px 10px 0 18px; border-radius: 2px; background: #e8f4fa; }
.tasks { display: grid; grid-template-columns: repeat(4, 82px); gap: 2px; padding-top: 1px; }
.task { height: 8px; padding-left: 6px; background: linear-gradient(90deg, #d5e4ef, #b9cfdf 50%, #5c8db3); }
.task::before { content: ""; display: block; width: 14px; height: 8px; margin-top: 1px; border-radius: 7px 7px 0 0; background: #1e88d9; }
.task.ps { background: linear-gradient(90deg, #e0edf4, #d5e4ed); }
.task.ps::before { border-radius: 0; background: #073642; }
.task.wide::before { border-radius: 0; background: #4a90d9; }
.task.sky::before { background: #6bc8ef; }
.taskbar time { margin-left: auto; color: #fff; }

/* Brand card floating over the panels */
.brand { position: absolute; right: 21px; bottom: 14px; display: flex; align-items: flex-end; }
.card { position: relative; display: flex; align-items: center; gap: 12px; width: 180px; height: 85px; padding-left: 14px; background: #223056; color: #c7cad6; }
.card svg { width: 36px; height: 38px; }
.words { display: flex; flex-direction: column; padding-bottom: 4px; }
.words strong { font: bold 26px/36px "Noto Sans CJK SC", sans-serif; }
.words span { font: 12px/14px "DejaVu Sans", sans-serif; }
.ear { position: absolute; width: 12px; height: 12px; border-radius: 50%; background: #d8dade; }
.ear.one { left: 77px; top: -7px; }
.ear.two { left: 94px; top: -5px; }
.tray { display: flex; align-items: center; justify-content: space-around; width: 34px; height: 11px; margin-bottom: 2px; background: #fff; }
```
